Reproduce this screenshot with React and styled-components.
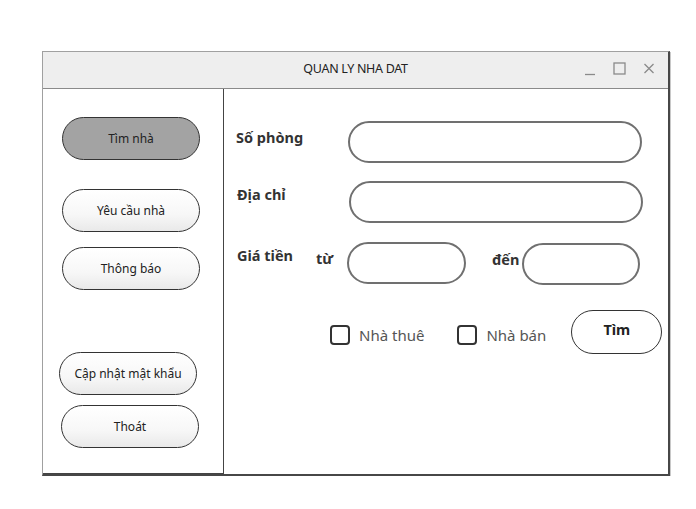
import React, { useState } from "react";
import styled, { createGlobalStyle } from "styled-components";

const GlobalStyle = createGlobalStyle`
    html, body {
        margin: 0;
        padding: 0;
        background: #fff;
        font-family: "Noto Sans", "Open Sans", sans-serif;
        color: #333;
    }
`;

const MENU = [
    { label: "Tìm nhà", gap: 0, shift: 0 },
    { label: "Yêu cầu nhà", gap: 29, shift: 0 },
    { label: "Thông báo", gap: 15, shift: 0 },
    { label: "Cập nhật mật khẩu", gap: 62, shift: -3 },
    { label: "Thoát", gap: 10, shift: -1 },
];

const App = () => {
    const [active, setActive] = useState(0);
    const [rent, setRent] = useState(false);
    const [sale, setSale] = useState(false);

    return (
        <Page>
            <GlobalStyle />
            <Window>
                <TitleBar>
                    <Spacer />
                    <Title>QUAN LY NHA DAT</Title>
                    <Controls>
                        <svg width="12" height="14" viewBox="0 0 12 14">
                            <path d="M1 12.5h10" stroke="#8a8a8a" strokeWidth="1.3" />
                        </svg>
                        <svg width="13" height="14" viewBox="0 0 13 14">
                            <rect x="1" y="1" width="11" height="11" fill="none" stroke="#8a8a8a" strokeWidth="1.3" />
                        </svg>
                        <svg width="12" height="14" viewBox="0 0 12 14">
                            <path d="M1.5 2l9 9M10.5 2l-9 9" stroke="#8a8a8a" strokeWidth="1.3" />
                        </svg>
                    </Controls>
                </TitleBar>
                <Body>
                    <Sidebar>
                        {MENU.map((m, idx) => (
                            <MenuButton
                                key={idx}
                                $active={active === idx}
                                $gap={m.gap}
                                $shift={m.shift}
                                onClick={() => setActive(idx)}
                            >
                                {m.label}
                            </MenuButton>
                        ))}
                    </Sidebar>
                    <Main>
                        <Row $top={32}>
                            <Label $pad={6} $width={112}>Số phòng</Label>
                            <Field $width={294} />
                        </Row>
                        <Row $top={18}>
                            <Label $pad={3} $width={112} $shift={1}>Địa chỉ</Label>
                            <Field $width={294} />
                        </Row>
                        <Row $top={19}>
                            <Label $pad={3} $width={79} $shift={1}>Giá tiền</Label>
                            <Label $pad={6} $width={31}>từ</Label>
                            <Field $width={119} />
                            <Label $pad={7} $width={30} $shift={26}>đến</Label>
                            <Field $width={118} $pad={1} />
                        </Row>
                        <Options>
                            <Check onClick={() => setRent(!rent)}>
                                <Box $checked={rent} />
                                Nhà thuê
                            </Check>
                            <Check onClick={() => setSale(!sale)} $shift={33}>
                                <Box $checked={sale} />
                                Nhà bán
                            </Check>
                            <SearchButton>Tìm</SearchButton>
                        </Options>
                    </Main>
                </Body>
            </Window>
        </Page>
    );
};

export default App;

const Page = styled.div`
    padding: 51px 0 0 42px;
`;

const Window = styled.div`
    width: 625px;
    height: 422px;
    display: flex;
    flex-direction: column;
    border-top: 1px solid #a0a0a0;
    border-left: 1px solid #a0a0a0;
    border-right: 2px solid #474747;
    border-bottom: 2px solid #474747;
    box-shadow: 1px 1px 0 #c8c8c8;
`;

const TitleBar = styled.div`
    height: 36px;
    display: flex;
    align-items: center;
    background: #eeeeee;
    border-bottom: 1px solid #8a8a8a;
    padding-left: 13px;
`;

const Spacer = styled.div`
    flex: 1;
`;

const Title = styled.div`
    font-size: 12.5px;
    letter-spacing: -0.3px;
    color: #222;
    margin-top: -4px;
`;

const Controls = styled.div`
    flex: 1;
    display: flex;
    justify-content: flex-end;
    gap: 17px;
    padding-right: 13px;
    margin-top: -2px;
`;

const Body = styled.div`
    flex: 1;
    display: flex;
`;

const Sidebar = styled.div`
    width: 181px;
    height: 385px;
    display: flex;
    flex-direction: column;
    padding-top: 28px;
    box-sizing: border-box;
    border-right: 1px solid #444;
    border-bottom: 1px solid #444;
    flex-shrink: 0;
`;

const MenuButton = styled.button`
    width: 138px;
    height: 43px;
    margin: ${(p) => p.$gap}px 0 0 ${(p) => 19 + p.$shift}px;
    border: 1px solid #333;
    border-radius: 22px;
    background: ${(p) => (p.$active ? "#a3a3a3" : "linear-gradient(#ffffff, #f7f7f7 60%, #e9e9e9)")};
    font-family: "Noto Sans", sans-serif;
    font-size: 12px;
    color: #222;
    padding: 0;
    cursor: pointer;
`;

const Main = styled.div`
    flex: 1;
    display: flex;
    flex-direction: column;
    padding-left: 12px;
`;

const Row = styled.div`
    display: flex;
    align-items: flex-start;
    margin-top: ${(p) => p.$top}px;
`;

const Label = styled.div`
    width: ${(p) => p.$width}px;
    margin-left: ${(p) => p.$shift || 0}px;
    padding-top: ${(p) => p.$pad}px;
    line-height: 20px;
    font-size: 14.5px;
    font-weight: 700;
    color: #333;
    flex-shrink: 0;
`;

const Field = styled.input`
    width: ${(p) => p.$width}px;
    height: 42px;
    margin-top: ${(p) => p.$pad || 0}px;
    box-sizing: border-box;
    border: 2px solid #707070;
    border-radius: 21px;
    background: #fff;
    padding: 0 16px;
    font-family: "Noto Sans", sans-serif;
    font-size: 14px;
    outline: none;
    flex-shrink: 0;
`;

const Options = styled.div`
    display: flex;
    align-items: center;
    margin-top: 25px;
    padding-left: 94px;
`;

const Check = styled.label`
    display: flex;
    align-items: center;
    gap: 9px;
    margin-left: ${(p) => p.$shift || 0}px;
    margin-top: 6px;
    font-size: 15px;
    color: #555;
    cursor: pointer;
`;

const Box = styled.span`
    width: 20px;
    height: 20px;
    box-sizing: border-box;
    border: 2px solid #333;
    border-radius: 4px;
    background: ${(p) => (p.$checked ? "#333" : "#fff")};
`;

const SearchButton = styled.button`
    width: 91px;
    height: 44px;
    margin-left: 25px;
    border: 1.5px solid #333;
    border-radius: 22px;
    background: #fff;
    font-family: "Noto Sans", sans-serif;
    font-size: 14.5px;
    font-weight: 700;
    color: #222;
    padding: 0 0 6px;
    cursor: pointer;
`;
